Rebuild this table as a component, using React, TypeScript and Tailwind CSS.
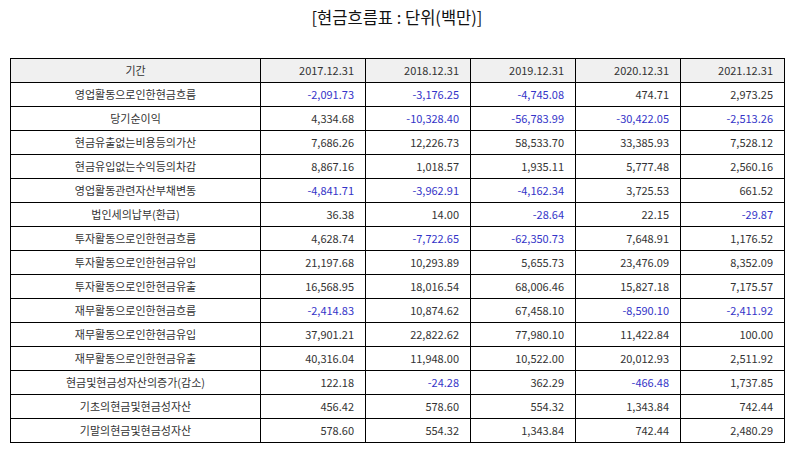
import React from "react";

const header = ["2017.12.31", "2018.12.31", "2019.12.31", "2020.12.31", "2021.12.31"];

const rows: [string, string[]][] = [
  ["영업활동으로인한현금흐름", ["-2,091.73", "-3,176.25", "-4,745.08", "474.71", "2,973.25"]],
  ["당기순이익", ["4,334.68", "-10,328.40", "-56,783.99", "-30,422.05", "-2,513.26"]],
  ["현금유출없는비용등의가산", ["7,686.26", "12,226.73", "58,533.70", "33,385.93", "7,528.12"]],
  ["현금유입없는수익등의차감", ["8,867.16", "1,018.57", "1,935.11", "5,777.48", "2,560.16"]],
  ["영업활동관련자산부채변동", ["-4,841.71", "-3,962.91", "-4,162.34", "3,725.53", "661.52"]],
  ["법인세의납부(환급)", ["36.38", "14.00", "-28.64", "22.15", "-29.87"]],
  ["투자활동으로인한현금흐름", ["4,628.74", "-7,722.65", "-62,350.73", "7,648.91", "1,176.52"]],
  ["투자활동으로인한현금유입", ["21,197.68", "10,293.89", "5,655.73", "23,476.09", "8,352.09"]],
  ["투자활동으로인한현금유출", ["16,568.95", "18,016.54", "68,006.46", "15,827.18", "7,175.57"]],
  ["재무활동으로인한현금흐름", ["-2,414.83", "10,874.62", "67,458.10", "-8,590.10", "-2,411.92"]],
  ["재무활동으로인한현금유입", ["37,901.21", "22,822.62", "77,980.10", "11,422.84", "100.00"]],
  ["재무활동으로인한현금유출", ["40,316.04", "11,948.00", "10,522.00", "20,012.93", "2,511.92"]],
  ["현금및현금성자산의증가(감소)", ["122.18", "-24.28", "362.29", "-466.48", "1,737.85"]],
  ["기초의현금및현금성자산", ["456.42", "578.60", "554.32", "1,343.84", "742.44"]],
  ["기말의현금및현금성자산", ["578.60", "554.32", "1,343.84", "742.44", "2,480.29"]],
];

export default function App() {
  return (
    <div
      className="w-[794px] h-[452px] bg-white text-[#222]"
      style={{ fontFamily: '"Noto Sans CJK KR", "Noto Sans", sans-serif' }}
    >
      <div className="pt-[5px] h-[58px] text-center text-[16.5px] leading-[24px] text-[#111]">
        [현금흐름표 : 단위(백만)]
      </div>
      <table className="ml-[10px] w-[774px] border-collapse table-fixed text-[11px] text-[#333]">
        <colgroup>
          <col className="w-[250px]" />
          <col className="w-[105px]" />
          <col className="w-[105px]" />
          <col className="w-[105px]" />
          <col className="w-[105px]" />
          <col className="w-[104px]" />
        </colgroup>
        <thead>
          <tr className="h-[24px] bg-[#f0f0f0]">
            <th className="border border-black font-normal text-center p-0 leading-none">기간</th>
            {header.map((h) => (
              <th key={h} className="border border-black font-normal text-right pr-[11px] p-0 leading-none">
                {h}
              </th>
            ))}
          </tr>
        </thead>
        <tbody>
          {rows.map(([label, vals]) => (
            <tr key={label} className="h-[24px]">
              <td className="border border-black text-center p-0 leading-none">{label}</td>
              {vals.map((v, i) => (
                <td
                  key={i}
                  className={
                    "border border-black text-right p-0 pr-[11px] leading-none " +
                    (v.startsWith("-") ? "text-[#3434c8]" : "")
                  }
                >
                  {v}
                </td>
              ))}
            </tr>
          ))}
        </tbody>
      </table>
    </div>
  );
}
